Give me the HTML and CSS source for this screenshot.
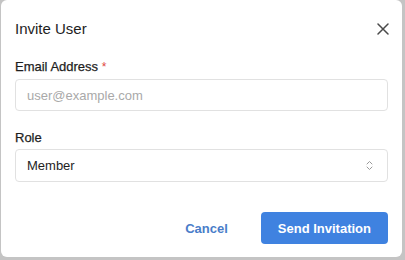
FILE: index.html
```html
<!DOCTYPE html>
<html lang="en">
<head>
  <meta charset="UTF-8">
  <meta name="viewport" content="width=device-width, initial-scale=1.0">
  <title>Invite User</title>
  <link rel="stylesheet" href="styles.css">
</head>
<body>
  <div class="backdrop-peek"></div>
  <div class="modal">
    <div class="modal-header">
      <h2>Invite User</h2>
      <button class="btn-close" aria-label="Close">
        <svg width="12" height="12" viewBox="0 0 12 12">
          <path d="M1 1L11 11M11 1L1 11" stroke="#4a4a4a" stroke-width="1.5" stroke-linecap="round"/>
        </svg>
      </button>
    </div>
    <form class="modal-body">
      <div class="form-group">
        <label for="email">Email Address <span class="required">*</span></label>
        <input type="email" id="email" placeholder="user@example.com">
      </div>
      <div class="form-group role-group">
        <label for="role">Role</label>
        <div class="select-wrap">
          <select id="role">
            <option>Member</option>
            <option>Admin</option>
          </select>
          <svg class="select-icon" width="7" height="11" viewBox="0 0 7 11">
            <path d="M1 4L3.5 1.5L6 4M1 7L3.5 9.5L6 7" fill="none" stroke="#9a9a9a" stroke-width="1" stroke-linecap="round" stroke-linejoin="round"/>
          </svg>
        </div>
      </div>
    </form>
    <div class="modal-footer">
      <button class="btn-cancel">Cancel</button>
      <button class="btn-primary">Send Invitation</button>
    </div>
  </div>
</body>
</html>
```

FILE: styles.css
```css
:root {
  --primary: #3f82e0;
  --primary-text: #4a7dc9;
  --text: #1e1e1e;
  --border: #e1e1e1;
  --placeholder: #a9a9a9;
  --error: #e0483f;
}

* {
  margin: 0;
  padding: 0;
  box-sizing: border-box;
  font-family: 'Liberation Sans', Arial, sans-serif;
}

body {
  background-color: #c4c4c4;
  width: 405px;
  height: 260px;
  overflow: hidden;
  position: relative;
}

.backdrop-peek {
  position: absolute;
  top: 0;
  left: 232px;
  width: 36px;
  height: 2px;
  background-color: #b9b2d6;
}

.modal {
  position: relative;
  background-color: #ffffff;
  margin: 0 3px 0 1px;
  height: 257px;
  border-radius: 6px;
  padding: 19px 14px 0 14px;
  color: var(--text);
}

.modal-header {
  display: flex;
  justify-content: space-between;
  align-items: center;
  height: 20px;
}

.modal-header h2 {
  font-size: 15px;
  font-weight: normal;
  line-height: 20px;
  color: var(--text);
}

.btn-close {
  background: none;
  border: none;
  width: 20px;
  height: 20px;
  display: flex;
  align-items: center;
  justify-content: center;
  margin-right: -5px;
  cursor: pointer;
}

.modal-body {
  margin-top: 20px;
}

.form-group label {
  display: block;
  font-size: 13px;
  line-height: 16px;
  margin-bottom: 4px;
  color: var(--text);
  -webkit-text-stroke: 0.25px var(--text);
}

.required {
  color: var(--error);
  -webkit-text-stroke: 0;
  font-size: 12px;
}

.role-group {
  margin-top: 19px;
}

.role-group label {
  margin-bottom: 3px;
}

input[type="email"], select {
  width: 100%;
  height: 32px;
  padding: 0 11px;
  border: 1px solid var(--border);
  border-radius: 4px;
  font-size: 13px;
  color: var(--text);
  background-color: #ffffff;
  outline: none;
}

input::placeholder {
  color: var(--placeholder);
}

.select-wrap {
  position: relative;
}

select {
  height: 33px;
  -webkit-appearance: none;
  appearance: none;
}

.select-icon {
  position: absolute;
  right: 15px;
  top: 11px;
  pointer-events: none;
}

.modal-footer {
  display: flex;
  justify-content: flex-end;
  gap: 16px;
  margin-top: 30px;
}

.btn-cancel, .btn-primary {
  height: 32px;
  padding: 0 17px;
  border-radius: 4px;
  font-size: 13px;
  font-weight: bold;
  border: none;
  white-space: nowrap;
  cursor: pointer;
}

.btn-cancel {
  background-color: transparent;
  color: var(--primary-text);
}

.btn-primary {
  background-color: var(--primary);
  color: #ffffff;
}
```
